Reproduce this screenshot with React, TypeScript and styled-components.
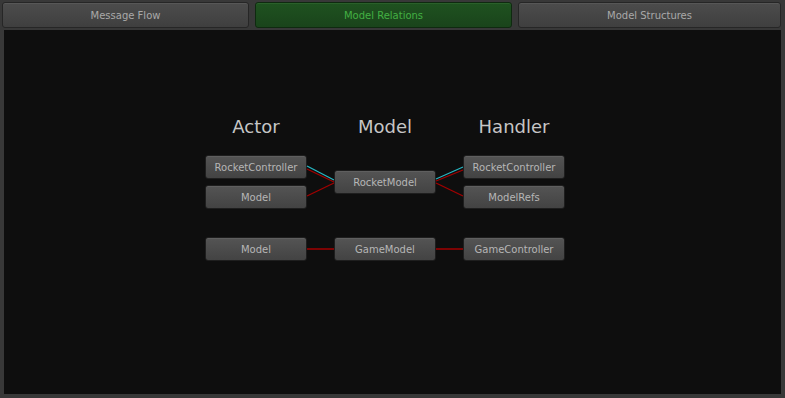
import React from 'react';
import styled, { createGlobalStyle } from 'styled-components';

const GlobalStyle = createGlobalStyle`
  html, body {
    margin: 0;
    padding: 0;
    background: #383838;
    font-family: "DejaVu Sans", Verdana, sans-serif;
  }
`;

const Window = styled.div`
  width: 785px;
  height: 398px;
  box-sizing: border-box;
  padding: 2px 4px 0 2px;
  display: flex;
  flex-direction: column;
  background: #383838;
`;

const TabBar = styled.div`
  display: flex;
  gap: 6px;
  height: 26px;
`;

const Tab = styled.div<{ $active?: boolean; $width: number }>`
  width: ${(p) => p.$width}px;
  box-sizing: border-box;
  display: flex;
  align-items: center;
  justify-content: center;
  font-size: 10px;
  border-radius: 3px;
  border: 1px solid ${(p) => (p.$active ? '#0f2a10' : '#262626')};
  background: ${(p) =>
    p.$active
      ? 'linear-gradient(#1f5220, #1a441b)'
      : 'linear-gradient(#4c4c4c, #3f3f3f)'};
  color: ${(p) => (p.$active ? '#43b043' : '#a9a9a9')};
  box-shadow: inset 0 1px 0 ${(p) => (p.$active ? '#2a612a' : '#575757')};
`;

const Canvas = styled.div`
  flex: 1;
  margin: 2px 0 4px 2px;
  background: #0e0e0e;
  padding: 86px 0 0 201px;
  box-sizing: border-box;
`;

const Graph = styled.div`
  display: grid;
  grid-template-columns: 102px 27px 102px 27px 102px;
  width: max-content;
`;

const Title = styled.div`
  font-size: 18px;
  line-height: 22px;
  height: 22px;
  color: #c6c6c6;
  text-align: center;
`;

const Group = styled.div<{ $top: number }>`
  grid-column: 1 / -1;
  display: grid;
  grid-template-columns: subgrid;
  margin-top: ${(p) => p.$top}px;
`;

const Stack = styled.div`
  display: flex;
  flex-direction: column;
  justify-content: center;
  gap: 6px;
`;

const Node = styled.div`
  height: 24px;
  box-sizing: border-box;
  border-radius: 3px;
  border: 1px solid #1e1e1e;
  background: linear-gradient(#545454, #434343);
  box-shadow: inset 0 1px 0 #5f5f5f;
  color: #b6b6b6;
  font-size: 10px;
  display: flex;
  align-items: center;
  justify-content: center;
`;

const Wires = styled.svg`
  display: block;
  overflow: visible;
`;

const CYAN = '#27b6c2';
const RED = '#a30000';

export default function App() {
  return (
    <>
      <GlobalStyle />
      <Window>
        <TabBar>
          <Tab $width={248}>Message Flow</Tab>
          <Tab $width={258} $active>Model Relations</Tab>
          <Tab $width={264}>Model Structures</Tab>
        </TabBar>
        <Canvas>
          <Graph>
            <Title>Actor</Title>
            <div />
            <Title>Model</Title>
            <div />
            <Title>Handler</Title>

            <Group $top={17}>
              <Stack>
                <Node>RocketController</Node>
                <Node>Model</Node>
              </Stack>
              <Wires width="27" height="54" viewBox="0 0 27 54">
                <line x1="0" y1="11" x2="27" y2="25" stroke={CYAN} strokeWidth="1.3" />
                <line x1="0" y1="14" x2="27" y2="27" stroke={RED} strokeWidth="1.3" />
                <line x1="0" y1="41" x2="27" y2="28" stroke={RED} strokeWidth="1.3" />
              </Wires>
              <Stack>
                <Node>RocketModel</Node>
              </Stack>
              <Wires width="27" height="54" viewBox="0 0 27 54">
                <line x1="0" y1="24" x2="27" y2="12" stroke={CYAN} strokeWidth="1.3" />
                <line x1="0" y1="26" x2="27" y2="15" stroke={RED} strokeWidth="1.3" />
                <line x1="0" y1="28" x2="27" y2="41" stroke={RED} strokeWidth="1.3" />
              </Wires>
              <Stack>
                <Node>RocketController</Node>
                <Node>ModelRefs</Node>
              </Stack>
            </Group>

            <Group $top={28}>
              <Node>Model</Node>
              <Wires width="27" height="24" viewBox="0 0 27 24">
                <line x1="0" y1="12" x2="27" y2="12" stroke={RED} strokeWidth="1.5" />
              </Wires>
              <Node>GameModel</Node>
              <Wires width="27" height="24" viewBox="0 0 27 24">
                <line x1="0" y1="12" x2="27" y2="12" stroke={RED} strokeWidth="1.5" />
              </Wires>
              <Node>GameController</Node>
            </Group>
          </Graph>
        </Canvas>
      </Window>
    </>
  );
}
